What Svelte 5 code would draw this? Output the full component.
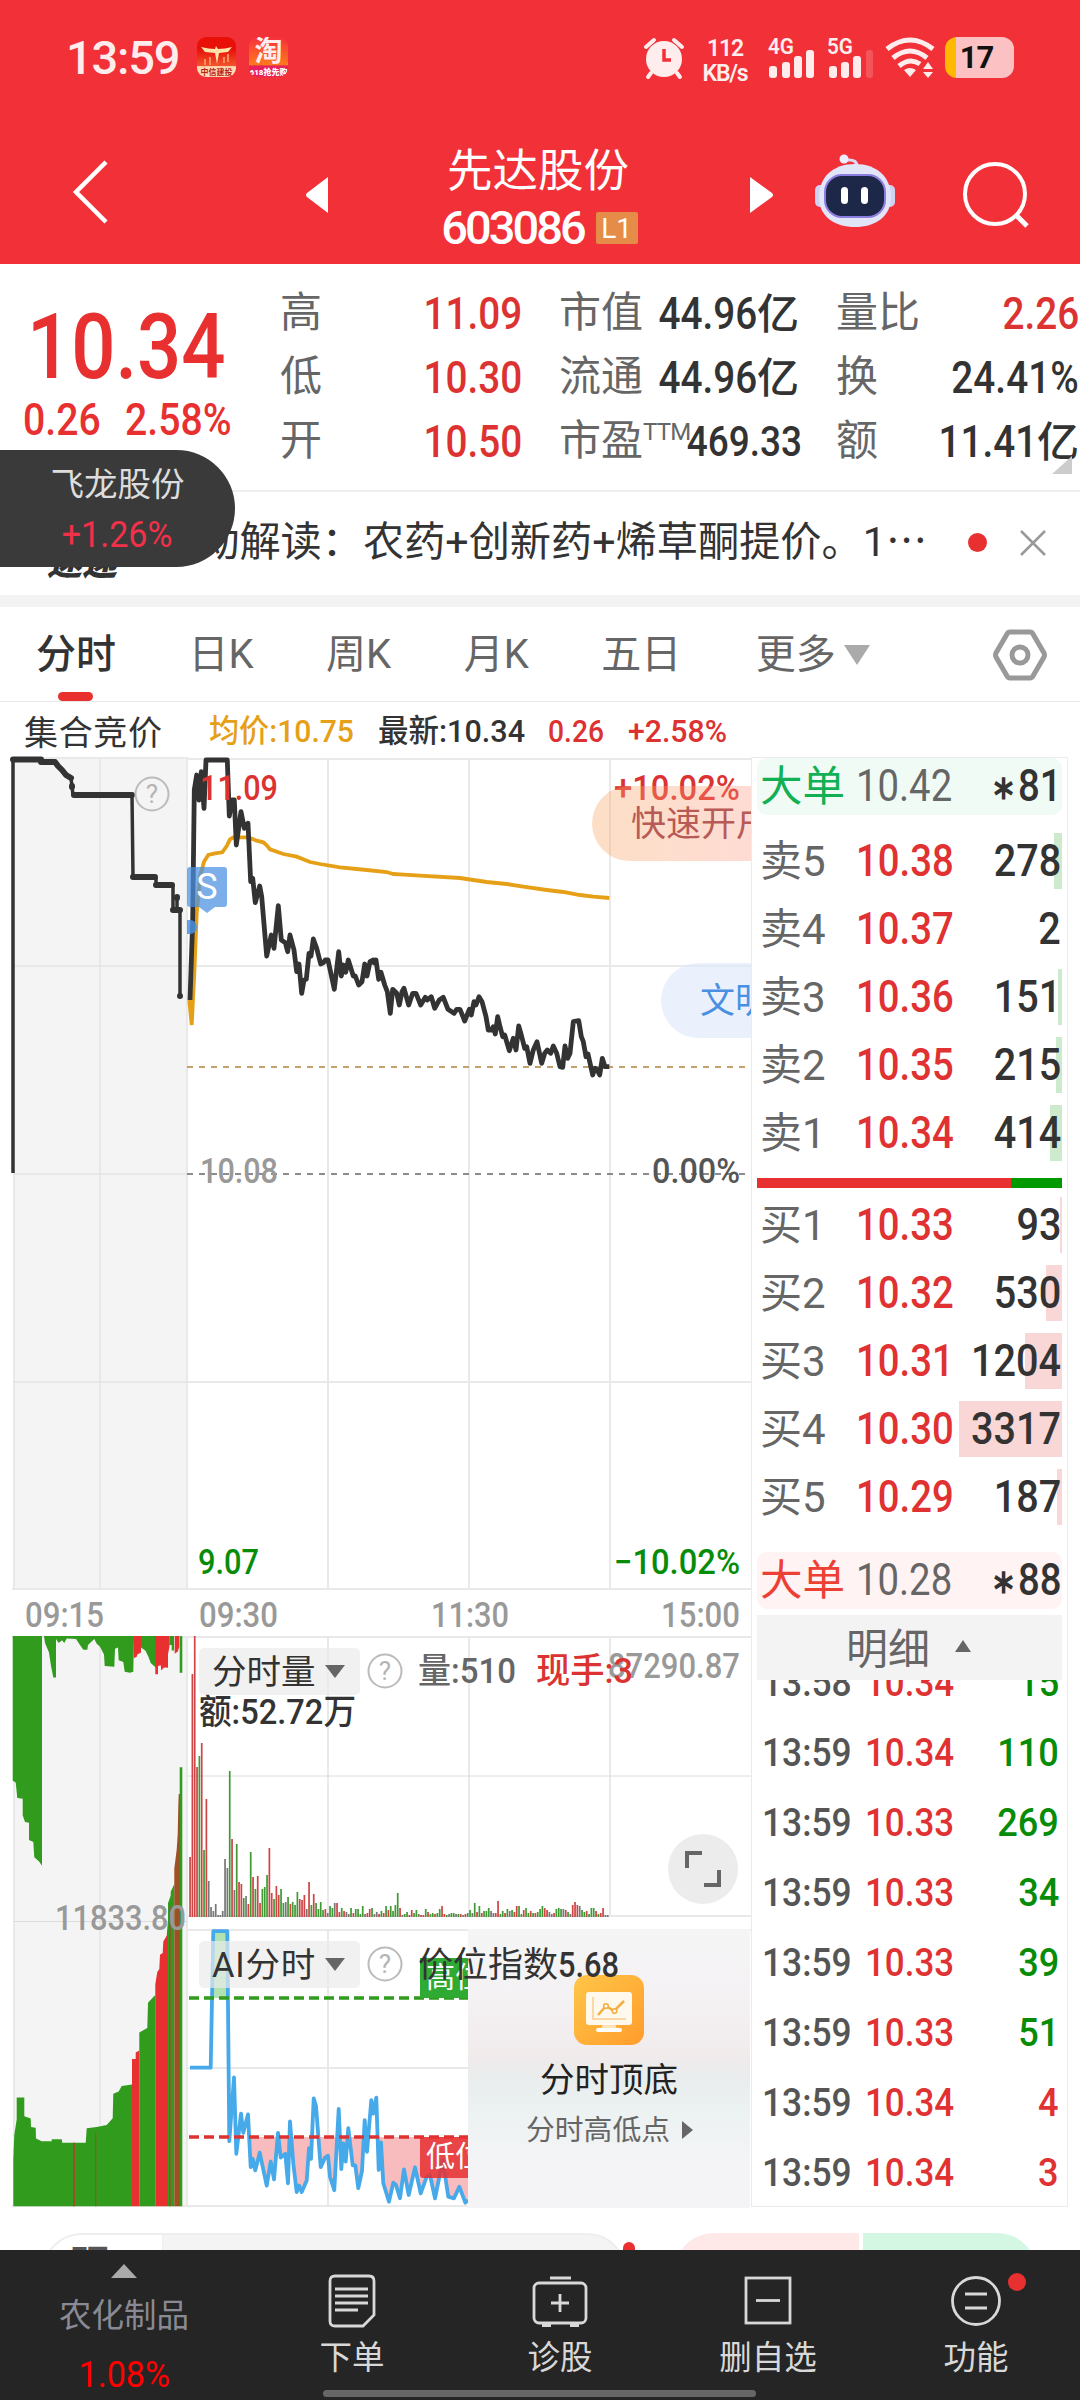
<script>
    const quotes = [
        { label: "高", value: "11.09", up: true },
        { label: "市值", value: "44.96", unit: "亿" },
        { label: "量比", value: "2.26", up: true },
        { label: "低", value: "10.30", up: true },
        { label: "流通", value: "44.96", unit: "亿" },
        { label: "换", value: "24.41%" },
        { label: "开", value: "10.50", up: true },
        { label: "市盈", sup: "TTM", value: "469.33" },
        { label: "额", value: "11.41", unit: "亿" },
    ];

    const tabs = ["分时", "日K", "周K", "月K", "五日"];

    // bar = width of the depth bar behind the volume
    const asks = [
        { label: "卖5", price: "10.38", qty: 278, bar: 8 },
        { label: "卖4", price: "10.37", qty: 2, bar: 0 },
        { label: "卖3", price: "10.36", qty: 151, bar: 4 },
        { label: "卖2", price: "10.35", qty: 215, bar: 6 },
        { label: "卖1", price: "10.34", qty: 414, bar: 12 },
    ];
    const bids = [
        { label: "买1", price: "10.33", qty: 93, bar: 2 },
        { label: "买2", price: "10.32", qty: 530, bar: 16 },
        { label: "买3", price: "10.31", qty: 1204, bar: 37 },
        { label: "买4", price: "10.30", qty: 3317, bar: 103 },
        { label: "买5", price: "10.29", qty: 187, bar: 5 },
    ];
    const trades = [
        { time: "13:58", price: "10.34", qty: 15, side: "sell" },
        { time: "13:59", price: "10.34", qty: 110, side: "sell" },
        { time: "13:59", price: "10.33", qty: 269, side: "sell" },
        { time: "13:59", price: "10.33", qty: 34, side: "sell" },
        { time: "13:59", price: "10.33", qty: 39, side: "sell" },
        { time: "13:59", price: "10.33", qty: 51, side: "sell" },
        { time: "13:59", price: "10.34", qty: 4, side: "buy" },
        { time: "13:59", price: "10.34", qty: 3, side: "buy" },
    ];

    // chart series are kept as flat x,y lists in third-of-a-pixel units
    function trace(flat, x0, y0, sy = 3) {
        const out = [];
        for (let i = 0; i < flat.length; i += 2) {
            out.push((x0 + flat[i] / 3).toFixed(1) + "," + (y0 + flat[i + 1] / sy).toFixed(1));
        }
        return out.join(" ");
    }

    const priceLine =
        trace([570,780,578,540,583,150,590,105,597,180,604,95,612,205,618,60,682,60,688,228,696,180,703,180,709,315,723,215,733,265,744,250,752,425,758,415,766,488,779,438,785,470,800,648,814,585,822,625,835,497,844,600,856,608,863,635,870,585,882,630,890,695,897,672,905,760,912,720,919,718,927,640,933,648,940,597,950,625,962,672,970,668,976,660,984,660,1003,748,1016,635,1024,708,1030,675,1037,697,1045,660,1060,708,1066,708,1076,735,1086,725,1094,672,1101,708,1110,665,1120,660,1122,668,1128,660,1136,718], 0, 740) +
        " " +
        trace([3,697,14,735,22,755,31,820,38,748,50,760,58,795,66,755,72,745,86,795,98,760,108,760,122,795,136,772,142,780,154,770,164,805,178,780,190,772,204,808,222,820,230,808,240,808,254,843,268,808,274,825,282,785,288,795,297,770,306,785,318,830,325,870,334,870,340,860,346,882,353,830,360,860,368,890,374,885,388,932,400,895,408,930,416,858,424,885,434,925,440,920,450,970,460,930,471,905,485,970,494,940,502,930,512,940,520,918,530,940,540,980,548,982,555,918,563,955,570,940,580,845,596,842,604,890,610,905,618,950,624,942,638,1005,645,985,652,990,659,1005,667,955,675,980,688,980], 380, 740);

    const avgLine =
        trace([568,780,575,855,583,700,590,520,600,410,612,365,625,345,645,340,667,337,680,318,690,298,700,292,745,292,770,302,790,307,800,316,810,328,850,342,890,350,930,366,960,372,1020,382,1100,390,1160,396,1180,402], 0, 740) +
        " " +
        trace([60,403,120,407,240,414,320,426,380,432,430,440,500,450,550,456,600,465,640,470,688,474], 380, 740);

    const aiLine =
        trace([570,1170,632,1170,640,813,682,813,688,1362,702,1195,709,1395,723,1290,730,1340,744,1292,752,1430,758,1408,766,1438,779,1392,800,1478,812,1415,822,1462,834,1340,842,1405,856,1395,864,1472,870,1310,880,1420,890,1495,897,1478,905,1495,920,1465,927,1380,933,1408,941,1250,948,1270,962,1430,975,1405,984,1400,990,1455,1003,1490,1016,1278,1024,1435,1030,1368,1037,1415,1045,1328,1058,1425,1066,1425,1075,1485,1086,1440,1094,1307,1101,1390,1114,1255,1120,1290,1129,1248,1136,1437,1143,1365], 0, 1620, 2.6133) +
        " " +
        trace([10,1450,27,1505,40,1448,48,1455,60,1495,72,1408,86,1485,105,1402,122,1480,140,1430,150,1425,165,1495,176,1440,188,1380,205,1490,222,1495,238,1460,256,1508,264,1500], 380, 1700);

    // auction volume, unmatched on top and matched below
    const auction = [
        { c: "g", d: [38,42,38,420,47,425,52,465,68,467,68,510,75,528,87,530,87,575,100,580,103,620,118,632,126,642,126,42] },
        { c: "g", d: [132,42,135,60,147,85,153,120,160,150,168,150,168,50,176,60,186,53,193,60,200,48,228,50,240,65,250,78,262,78,264,65,283,50,290,62,300,70,312,90,314,120,343,122,345,75,354,72,356,105,370,110,374,135,390,138,400,135,402,42] },
        { c: "r", d: [401,42,401,100,410,96,412,90,423,85,423,42] },
        { c: "g", d: [423,42,423,72,436,80,445,95,452,112,468,125,468,42] },
        { c: "r", d: [466,42,466,142,474,142,474,120,482,118,484,132,492,124,504,125,504,90,509,65,509,42] },
        { c: "g", d: [509,42,509,65,515,65,515,80,522,80,522,42] },
        { c: "r", d: [524,42,524,88,533,82,538,70,538,42] },
        { c: "g", d: [539,42,539,138,547,138,547,42] },
        { c: "g", d: [40,1532,40,1410,43,1345,50,1305,50,1248,73,1248,73,1297,92,1303,93,1325,107,1327,108,1355,125,1362,155,1362,155,1357,185,1357,187,1366,257,1366,260,1328,290,1325,320,1320,338,1302,340,1238,356,1232,365,1218,396,1214,396,1532] },
        { c: "r", d: [396,1532,396,1147,407,1147,407,1130,418,1125,418,1532] },
        { c: "g", d: [418,1532,418,1078,442,1066,444,1000,455,990,466,980,466,1532] },
        { c: "r", d: [466,1532,466,952,472,920,478,912,480,875,488,870,490,840,500,825,504,785,504,1532] },
        { c: "g", d: [504,1532,504,740,512,720,512,710,523,690,523,1532] },
        { c: "b", d: [523,1532,523,650,530,600,533,560,535,485,536,455,540,455,540,1532] },
        { c: "g", d: [539,1532,539,385,547,385,547,1532] },
        { c: "b", d: [219,1532,219,1366,225,1366,225,1532] },
        { c: "b", d: [285,1532,285,1340,289,1340,289,1532] },
        { c: "b", d: [508,1532,508,760,512,745,512,1532] },
    ];
    const auctionColors = { g: "#319b1d", r: "#e83030", b: "#9c5024" };

    // minute volume: height + side (r/g/k)
    const volume = "60r 243r 281r 150r 161g 174r 67g 118r 36k 10k 6k 13k 2k 2k 6k 58k 49k 146g 78r 27k 73g 35r 33r 19g 21k 13r 65g 40r 28g 41r 14r 28g 30g 42g 69r 24r 18g 31r 22r 28g 14g 15k 20g 13r 15g 12g 25g 18r 17r 22r 8k 35r 12g 23r 14g 8g 15g 7g 8r 4k 11g 9g 14k 14r 5r 9g 6r 5k 3k 9g 4r 8g 8g 3g 11g 3k 4r 8r 9g 3k 5k 3r 6g 4r 11g 7r 11g 6g 12g 24g 9r 2k 3g 5g 2r 7r 4g 7g 3k 2r 2r 8g 5r 3g 4g 3r 4g 8g 11r 3r 2g 3k 4g 4g 3k 3g 3r 2k 3r 4g 7g 4k 14g 5r 11g 4r 6g 6g 9g 6k 4k 4r 16r 3g 6g 4r 8g 6k 7g 5r 11r 11g 3g 7r 9g 4g 6r 4g 4r 5g 8g 11g 9r 7r 5k 3k 4r 8g 9g 8g 8k 7r 5g 3k 12r 15r 12r 11k 7g 5g 6r 3g 9g 9g 6r 3g 4r 9r 2k 2k"
        .split(" ")
        .map((v) => ({ h: parseInt(v), c: v.at(-1) }));
    const volumeColors = { r: "#cf4444", g: "#3f9a33", k: "#777" };
    const step = 420 / volume.length;
</script>

{#snippet help(cx, cy)}
    <circle {cx} {cy} r="16.5" fill="none" stroke="#bbb" stroke-width="2" />
    <text x={cx} y={cy + 9} text-anchor="middle" fill="#b4b4b4" font-size="26">?</text>
{/snippet}

{#snippet level(row, side)}
    <div class="level">
        <i class="depth {side}" style="width: {row.bar}px"></i>
        <span class="lv-label">{row.label}</span>
        <span class="num lv-price">{row.price}</span>
        <span class="num right lv-qty">{row.qty}</span>
    </div>
{/snippet}

<div class="app">
    <header>
        <div class="status">
            <span class="clock">13:59</span>
            <div class="badge-app citic">
                <svg width="39" height="40" viewBox="0 0 39 40">
                    <path d="M4 10Q12 12 18 12L19 9L21 12Q28 12 35 10L31 15L22 16L20 27L18 16L8 15Z" fill="#ffe3a8" />
                    <path d="M8 22v6M13 20v8M27 20v6M31 17v8" stroke="#ff8c5a" stroke-width="2" />
                </svg>
                <b>中信建投</b>
            </div>
            <div class="badge-app tao"><span>淘</span><b>618抢先购</b></div>
            <div class="status-right">
                <svg class="alarm" width="42" height="42" viewBox="0 0 42 42">
                    <circle cx="21" cy="22" r="18" fill="#ffeded" />
                    <path d="M3 10L11 3M39 10L31 3M8 36l-3 4M34 36l3 4" stroke="#ffeded" stroke-width="4" stroke-linecap="round" />
                    <path d="M21 12V23H28" fill="none" stroke="#f23037" stroke-width="3.5" />
                </svg>
                <div class="speed"><span>112</span><span>KB/s</span></div>
                <svg width="46" height="42" viewBox="0 0 46 42" fill="#ffeded">
                    <text x="0" y="17" font-size="22" font-weight="600" textLength="26" lengthAdjust="spacingAndGlyphs">4G</text>
                    <rect x="1" y="29" width="8" height="12" rx="3" /><rect x="14" y="25" width="8" height="16" rx="3" />
                    <rect x="26" y="19" width="8" height="22" rx="3" /><rect x="38" y="13" width="8" height="28" rx="3" />
                </svg>
                <svg class="sim2" width="46" height="42" viewBox="0 0 46 42" fill="#ffeded">
                    <text x="0" y="17" font-size="22" font-weight="600" textLength="26" lengthAdjust="spacingAndGlyphs">5G</text>
                    <rect x="2" y="29" width="8" height="12" rx="3" /><rect x="14" y="25" width="8" height="16" rx="3" />
                    <rect x="26" y="19" width="8" height="22" rx="3" /><rect x="39" y="13" width="7" height="28" rx="3" opacity=".2" />
                </svg>
                <svg class="wifi" width="50" height="42" viewBox="0 0 50 42" fill="none" stroke="#ffeded" stroke-width="5">
                    <path d="M2 12Q25 -6 48 12M8 21Q25 7 42 21M14 29Q25 20 35 27" />
                    <path d="M19 33Q25 29 31 33L25 40Z M38 32L43 25L48 32Z M38 35L43 41L48 35Z" fill="#ffeded" stroke="none" />
                </svg>
                <div class="battery">17</div>
            </div>
        </div>
        <div class="nav">
            <svg class="back" width="36" height="66" viewBox="0 0 36 66"><path d="M33 3L3 33L33 63" fill="none" stroke="#fff" stroke-width="4.5" /></svg>
            <svg class="prev" width="22" height="36" viewBox="0 0 22 36"><path d="M22 0V36L1 20Q-1 18 1 16Z" fill="#fff" /></svg>
            <div class="title">
                <h1>先达股份</h1>
                <div class="code"><span>603086</span><em>L1</em></div>
            </div>
            <svg class="next" width="23" height="36" viewBox="0 0 23 36"><path d="M0 0V36L22 20Q24 18 22 16Z" fill="#fff" /></svg>
            <svg class="robot" width="80" height="76" viewBox="0 0 80 76">
                <path d="M42 15Q43 6 32 7" fill="none" stroke="#d9dcf5" stroke-width="3" />
                <circle cx="29" cy="6" r="4.5" fill="#eef" />
                <rect x="0" y="32" width="12" height="22" rx="5" fill="#cfd3f2" /><rect x="68" y="32" width="12" height="22" rx="5" fill="#cfd3f2" />
                <path d="M40 11C62 11 76 24 76 44C76 64 60 74 40 74S4 64 4 44C4 24 18 11 40 11Z" fill="#e2e4f8" />
                <rect x="10" y="22" width="60" height="42" rx="17" fill="#1d2747" stroke="#8b7ee0" stroke-width="2" />
                <rect x="26" y="34" width="7" height="17" rx="3.5" fill="#fff" /><rect x="46" y="34" width="7" height="17" rx="3.5" fill="#fff" />
            </svg>
            <svg class="search" width="68" height="68" viewBox="0 0 68 68" fill="none" stroke="#fff" stroke-width="4"><circle cx="33" cy="33" r="30" /><path d="M54 54L65 65" stroke-width="5" /></svg>
        </div>
    </header>

    <section class="quote">
        <div class="last">
            <div class="num big">10.34</div>
            <div class="change"><span class="num">0.26</span><span class="num">2.58%</span></div>
        </div>
        <div class="grid">
            {#each quotes as q}
                <div class="cell">
                    <span class="q-label">{q.label}{#if q.sup}<sup>{q.sup}</sup>{/if}</span>
                    <span class="q-value" class:up={q.up} class:small={q.sup}>
                        <span class="num right">{q.value}</span>{#if q.unit}<b>{q.unit}</b>{/if}
                    </span>
                </div>
            {/each}
        </div>
        <i class="corner"></i>
    </section>

    <section class="news">
        <span class="tag">速递</span>
        <p>异动解读：农药+创新药+烯草酮提价。1⋯</p>
        <i class="dot"></i>
        <svg width="26" height="26" viewBox="0 0 26 26"><path d="M1 1L25 25M25 1L1 25" stroke="#999" stroke-width="2.5" /></svg>
    </section>

    <div class="float-pill"><span>飞龙股份</span><span class="num pct">+1.26%</span></div>

    <nav class="tabs">
        {#each tabs as tab, i}
            <span class="tab" class:active={i === 0}>{tab}</span>
        {/each}
        <span class="tab more">更多<i></i></span>
        <svg width="54" height="52" viewBox="0 0 54 52" fill="none" stroke="#999" stroke-width="5">
            <path d="M17 3H37Q39 3 40 5L51 24Q52 26 51 28L40 47Q39 49 37 49H17Q15 49 14 47L3 28Q2 26 3 24L14 5Q15 3 17 3Z" /><circle cx="27" cy="26" r="8" />
        </svg>
    </nav>

    <div class="body">
        <div class="charts">
            <svg width="752" height="1506" viewBox="0 702 752 1506">
                <defs>
                    <clipPath id="below"><rect x="188" y="2137" width="280" height="71" /></clipPath>
                    <clipPath id="left"><rect x="188" y="1925" width="280" height="283" /></clipPath>
                </defs>
                <g font-size="34" fill="#333">
                    <text x="24" y="745" textLength="138">集合竞价</text>
                    <text class="d" x="209" y="742" fill="#e6a017" font-size="32" textLength="145" lengthAdjust="spacingAndGlyphs">均价:10.75</text>
                    <text class="d" x="378" y="742" font-size="32" textLength="147" lengthAdjust="spacingAndGlyphs">最新:10.34</text>
                    <text class="d" x="548" y="742" fill="#dc3232" font-size="32" textLength="56" lengthAdjust="spacingAndGlyphs">0.26</text>
                    <text class="d" x="628" y="742" fill="#dc3232" font-size="32" textLength="99" lengthAdjust="spacingAndGlyphs">+2.58%</text>
                </g>

                <rect x="13" y="757" width="174" height="832" fill="#f4f4f4" />
                <rect x="13" y="1636" width="174" height="570" fill="#f4f4f4" />
                <g stroke="#e9e9e9" stroke-width="2">
                    <path d="M12 758H187M14 757V1589M100 757V1589M100 1636V2206M14 1636V2206M187 757V1589M187 1636V2206" />
                    <path d="M188 759H752M188 966H752M188 1382H752M12 1589H752M12 1637H752M188 1916H752M188 1930H752M188 2068H468M12 2206H468" />
                    <path d="M328 759V1589M469 759V1589M610 759V1589M328 1637V1916M469 1637V1916M610 1637V1916M328 1930V2206" />
                    <path d="M14 966H187M14 1174H187M14 1382H187M14 1921.5H187M188 1776H752" stroke="#dcdcdc" stroke-width="1" />
                </g>
                <path d="M187 1067H746" stroke="#c3a16f" stroke-width="2" stroke-dasharray="6 6" />
                <path d="M187 1174H746" stroke="#8c8c8c" stroke-width="2" stroke-dasharray="6 6" />

                <g fill="none" stroke="#333" stroke-linecap="round" stroke-linejoin="round">
                    <path d="M13 1173V759M71 778L73 795M132 795L133 877M156 877V885M173 885V910M177 897V910M180 910V996" stroke-width="3.5" stroke-linecap="butt" />
                    <path d="M13 759.5H41M41 762H55L58 766L62 770L66 775L71 778M72 786V787M74 795H132M133 877H155M156 885H172M173 910H180M177 897V898M180 996V996.1" stroke-width="6" />
                </g>
                {@render help(152, 794)}

                <polyline points={avgLine} fill="none" stroke="#e6a017" stroke-width="3.8" />
                <polyline points={priceLine} fill="none" stroke="#333" stroke-width="4.8" stroke-linejoin="round" />

                <path d="M190 867H224Q227 867 227 870V904Q227 907 224 907H215L207 913L199 907H190Q187 907 187 904V870Q187 867 190 867Z" fill="#4a90e2" fill-opacity=".72" />
                <path d="M187 920H190A7 7 0 0 1 190 934H187Z" fill="#4a90e2" opacity=".85" />
                <text x="207" y="899" font-size="36" fill="#fff" text-anchor="middle">S</text>

                <g class="d" font-size="35">
                    <g fill="#dc3232"><text x="200" y="800" textLength="78" lengthAdjust="spacingAndGlyphs">11.09</text><text x="614" y="800" textLength="126" lengthAdjust="spacingAndGlyphs">+10.02%</text></g>
                    <text x="200" y="1183" fill="#999" textLength="78" lengthAdjust="spacingAndGlyphs">10.08</text>
                    <text x="652" y="1183" fill="#555" textLength="88" lengthAdjust="spacingAndGlyphs">0.00%</text>
                    <g fill="#078c07"><text x="198" y="1574" textLength="61" lengthAdjust="spacingAndGlyphs">9.07</text><text x="614" y="1574" textLength="126" lengthAdjust="spacingAndGlyphs">−10.02%</text></g>
                    <g fill="#999">
                        <text x="25" y="1627" textLength="79" lengthAdjust="spacingAndGlyphs">09:15</text>
                        <text x="199" y="1627" textLength="79" lengthAdjust="spacingAndGlyphs">09:30</text>
                        <text x="431" y="1627" textLength="78" lengthAdjust="spacingAndGlyphs">11:30</text>
                        <text x="661" y="1627" textLength="79" lengthAdjust="spacingAndGlyphs">15:00</text>
                    </g>
                </g>

                {#each auction as a}
                    <polygon points={trace(a.d, 0, 1620, 2.6133)} fill={auctionColors[a.c]} />
                {/each}
                <text class="d" x="55" y="1930" font-size="35" fill="#999" textLength="131" lengthAdjust="spacingAndGlyphs">11833.80</text>

                {#each volume as v, i}
                    <rect x={189.2 + i * step} y={1917 - v.h} width="1.7" height={v.h} fill={volumeColors[v.c]} />
                {/each}

                <rect x="213" y="1931" width="15" height="67" fill="#b0e3b0" />
                <polygon points="190,2137 {aiLine} 468,2137" fill="#f8bcbf" clip-path="url(#below)" />
                <g clip-path="url(#left)">
                    <polyline points={aiLine} fill="none" stroke="#45a9ea" stroke-width="3.8" stroke-linejoin="round" />
                    <path d="M189 1998H468" stroke="#319b1d" stroke-width="3.5" stroke-dasharray="10 5" />
                    <path d="M189 2137H468" stroke="#dc3232" stroke-width="3.5" stroke-dasharray="10 5" />
                    <rect x="420" y="1958" width="60" height="40" fill="#2faa33" />
                    <rect x="420" y="2137" width="60" height="41" rx="3" fill="#e83030" fill-opacity=".85" />
                    <text x="426" y="1988" font-size="29" fill="#fff">高位</text>
                    <text x="426" y="2167" font-size="29" fill="#fff">低位</text>
                </g>
                {@render help(385, 1671)}
                {@render help(385, 1964)}
                <text class="d" x="418" y="1683" font-size="35" fill="#666" textLength="98" lengthAdjust="spacingAndGlyphs">量:510</text>
                <text class="d" x="608" y="1678" font-size="35" fill="#999" textLength="132" lengthAdjust="spacingAndGlyphs">87290.87</text>
                <text class="d" x="536" y="1683" font-size="35" fill="#dc3232" textLength="97" lengthAdjust="spacingAndGlyphs">现手:3</text>
                <text class="d" x="199" y="1724" font-size="35" fill="#333" textLength="157" lengthAdjust="spacingAndGlyphs">额:52.72万</text>
            </svg>

            <div class="chip vol">分时量<i></i></div>
            <div class="chip ai"><span>AI分时</span><i></i></div>

            <div class="promo open">快速开户</div>
            <div class="promo civil">文明</div>

            <div class="expand">
                <svg width="36" height="36" viewBox="0 0 36 36" fill="none" stroke="#666" stroke-width="4"><path d="M2 17V2H17M34 19V34H19" /></svg>
            </div>

            <div class="card">
                <svg width="70" height="70" viewBox="0 0 70 70">
                    <defs><linearGradient id="sun" x1="0" y1="0" x2="1" y2="1"><stop offset="0" stop-color="#ffc648" /><stop offset="1" stop-color="#ff9c2c" /></linearGradient></defs>
                    <rect width="70" height="70" rx="13" fill="url(#sun)" />
                    <path d="M29 49H41L43 54H27Z" fill="#ffe3b8" />
                    <rect x="12" y="17" width="46" height="33" rx="3" fill="#fff8ec" /><rect x="22" y="53" width="26" height="4" rx="2" fill="#fff" />
                    <path d="M19 22V44H52" fill="none" stroke="#fbd9a5" stroke-width="2" />
                    <path d="M24 40L32 31L40 36L50 26" fill="none" stroke="#f5ae3f" stroke-width="2.5" />
                    <circle cx="32" cy="31" r="2.3" fill="#fff" stroke="#f5ae3f" stroke-width="1.6" /><circle cx="40.5" cy="36" r="2.3" fill="#fff" stroke="#f5ae3f" stroke-width="1.6" />
                </svg>
                <strong>分时顶底</strong>
                <span>分时高低点<i></i></span>
            </div>
            <div class="index">价位指数<span class="num">5.68</span></div>
        </div>

        <aside class="book">
            <div class="block-order sell"><span>大单</span><span class="num p">10.42</span><span class="num right q"><small>∗</small>81</span></div>
            <div class="levels">
                {#each asks as row}{@render level(row, "ask")}{/each}
            </div>
            <div class="ratio"><i></i></div>
            <div class="levels bids">
                {#each bids as row}{@render level(row, "bid")}{/each}
            </div>
            <div class="block-order buy"><span>大单</span><span class="num p">10.28</span><span class="num right q"><small>∗</small>88</span></div>
            <div class="detail"><span>明细</span><i></i></div>
            <div class="trades">
                {#each trades as t}
                    <div class="trade">
                        <span class="num t-time">{t.time}</span>
                        <span class="num t-price">{t.price}</span>
                        <span class="num right t-qty {t.side}">{t.qty}</span>
                    </div>
                {/each}
            </div>
        </aside>
    </div>

    <div class="peek">
        <div class="peek-input"><span>研</span></div>
        <i class="peek-dot"></i>
        <div class="peek-vote"><i></i><i></i></div>
    </div>

    <footer>
        <div class="sector"><i></i><span>农化制品</span><b>1.08%</b></div>
        <div class="item">
            <svg width="50" height="54" viewBox="0 0 50 54"><path d="M8 2H42Q47 2 47 7V41L36 52H8Q3 52 3 47V7Q3 2 8 2ZM8 15H41M8 22H41M8 29H41M8 36H31" /></svg>
            下单
        </div>
        <div class="item">
            <svg width="56" height="54" viewBox="0 0 56 54"><rect x="2" y="9" width="52" height="40" rx="5" /><path d="M18 4H39M28 20V38M19 29H37" /><path d="M10 51H19M38 51H47" stroke-width="4" /></svg>
            诊股
        </div>
        <div class="item">
            <svg width="50" height="54" viewBox="0 0 50 54"><rect x="3" y="4" width="44" height="45" /><path d="M13 26.5H37" /></svg>
            删自选
        </div>
        <div class="item">
            <svg width="50" height="54" viewBox="0 0 50 54"><circle cx="25" cy="27" r="23.5" /><path d="M14 20H36M14 34H36" /></svg>
            功能
            <i class="red-dot"></i>
        </div>
        <div class="home"></div>
    </footer>
</div>

<style>
    :global(body) {
        background: #fff;
    }
    .app {
        position: relative;
        width: 1080px;
        height: 2400px;
        overflow: hidden;
        background: #fff;
        color: #333;
        font-family: Roboto, "Noto Sans CJK SC", sans-serif;
        line-height: 1;
        display: flex;
        flex-direction: column;
        white-space: nowrap;
    }
    .app * {
        box-sizing: border-box;
        flex-shrink: 0;
    }
    svg {
        display: block;
        overflow: visible;
    }
    i,
    em {
        font-style: normal;
    }
    .num {
        display: inline-block;
        font-weight: 500;
        transform: scaleX(0.88);
        transform-origin: left center;
    }
    .num.right {
        transform-origin: right center;
    }
    .d {
        font-weight: 500;
    }

    /* header */
    header {
        height: 264px;
        background: #f23037;
        color: #fff;
    }
    .status {
        display: flex;
        align-items: flex-start;
        height: 125px;
        padding: 37px 66px 0 66px;
        color: #ffeded;
    }
    .clock {
        width: 131px;
        font-size: 47px;
        font-weight: 500;
        line-height: 42px;
        letter-spacing: -1.2px;
    }
    .badge-app {
        position: relative;
        width: 39px;
        height: 40px;
        margin-right: 13px;
        border-radius: 9px;
        overflow: hidden;
        text-align: center;
    }
    .badge-app b {
        position: absolute;
        left: 0;
        bottom: 0;
        width: 78px;
        font-size: 16px;
        line-height: 20px;
        transform: scale(0.5);
        transform-origin: left bottom;
    }
    .citic {
        background: linear-gradient(#e81008 30%, #f0542c 72%, #ffd9b0 74%);
    }
    .citic b {
        color: #b8241a;
    }
    .tao {
        background: linear-gradient(#f5303c, #ff7a1c 70%, #e8205c 72%);
        font-size: 28px;
        font-weight: 700;
        line-height: 30px;
    }
    .tao b {
        color: #fff;
    }
    .status-right {
        display: flex;
        margin-left: auto;
    }
    .speed {
        display: flex;
        flex-direction: column;
        gap: 2px;
        width: 46px;
        margin: 0 20px 0 17px;
        font-size: 23px;
        font-weight: 600;
        text-align: center;
        letter-spacing: -1.2px;
    }
    .sim2 {
        margin-left: 13px;
    }
    .wifi {
        margin: 0 10px 0 12px;
    }
    .battery {
        width: 69px;
        height: 41px;
        border-radius: 12px;
        background: linear-gradient(90deg, #ffb900 11px, #fbc1c3 11px);
        color: #111;
        font-size: 31px;
        font-weight: 700;
        line-height: 42px;
        letter-spacing: -1px;
        text-align: center;
        padding-right: 6px;
    }
    .nav {
        display: flex;
        align-items: center;
        height: 139px;
        padding-left: 73px;
    }
    .back {
        margin: 0 197px 6px 0;
    }
    .title {
        width: 422px;
        text-align: center;
        padding: 2px 2px 0 0;
    }
    h1 {
        margin: 0 0 12px;
        font-size: 45.5px;
        font-weight: 400;
        line-height: 52px;
    }
    .code {
        display: flex;
        justify-content: center;
        align-items: center;
        gap: 12px;
        font-size: 47px;
        font-weight: 500;
        letter-spacing: -3px;
        line-height: 36px;
        padding-left: 3px;
    }
    .code em {
        width: 42px;
        height: 32px;
        background: #e58c48;
        border-radius: 2px;
        font-size: 28px;
        font-weight: 400;
        line-height: 34px;
        letter-spacing: 0;
    }
    .robot {
        margin: 0 67px 8px 42px;
    }

    /* quote */
    .quote {
        position: relative;
        display: flex;
        height: 226px;
    }
    .last {
        width: 280px;
        padding: 38px 0 0 27px;
        color: #e83030;
    }
    .big {
        font-size: 91px;
        transform: scaleX(0.855);
    }
    .change {
        display: flex;
        gap: 15px;
        margin: 5px 0 0 -4px;
        font-size: 44px;
    }
    .change .num {
        transform: scaleX(0.89);
    }
    .grid {
        display: grid;
        grid-template-columns: 242px 240px 243px;
        column-gap: 37px;
        align-content: start;
        padding-top: 17px;
    }
    .cell {
        display: flex;
        justify-content: space-between;
        align-items: center;
        height: 64px;
        font-size: 42px;
    }
    .q-label {
        color: #666;
    }
    .q-label sup {
        font-size: 24px;
        vertical-align: 15px;
        line-height: 0;
        letter-spacing: -0.8px;
    }
    .q-value {
        color: #333;
        font-size: 44px;
        padding-top: 2px;
    }
    .q-value.small {
        font-size: 42px;
        width: 112px;
        display: flex;
        justify-content: flex-end;
    }
    .q-value b {
        font-size: 42px;
        font-weight: 500;
    }
    .q-value.up {
        color: #dc3232;
    }
    .corner {
        position: absolute;
        right: 8px;
        bottom: 16px;
        border-left: 20px solid transparent;
        border-bottom: 18px solid #ccc;
    }

    /* news */
    .news {
        display: flex;
        align-items: center;
        height: 105px;
        padding: 0 34px 2px 47px;
        margin-bottom: 12px;
        box-shadow: 0 12px 0 #f3f3f3;
        border-top: 2px solid #eee;
    }
    .tag {
        width: 110px;
        font-size: 35px;
        font-weight: 900;
        font-style: italic;
        padding-top: 42px;
    }
    .news p {
        width: 811px;
        margin: 0;
        font-size: 41.2px;
    }
    .news .dot {
        width: 19px;
        height: 19px;
        margin-right: 33px;
        border-radius: 50%;
        background: #e83030;
    }
    .float-pill {
        position: absolute;
        left: 0;
        top: 450px;
        width: 235px;
        height: 117px;
        border-radius: 0 59px 59px 0;
        background: #3a3a3a;
        color: #ddd;
        font-size: 33.5px;
        display: flex;
        flex-direction: column;
        align-items: center;
        gap: 14px;
        padding-top: 18px;
    }
    .float-pill .pct {
        color: #f2304a;
        transform-origin: center;
        transform: scaleX(0.92);
        font-size: 37px;
        font-weight: 400;
    }

    /* tabs */
    .tabs {
        display: flex;
        align-items: center;
        height: 95px;
        padding: 2px 33px 0 36px;
        border-bottom: 1px solid #e8e8e8;
        font-size: 40px;
        color: #666;
    }
    .tab {
        position: relative;
        margin-right: 72.5px;
    }
    .tab.active {
        color: #333;
        font-weight: 500;
    }
    .tab.active::after {
        content: "";
        position: absolute;
        left: 22px;
        bottom: -26px;
        width: 35px;
        height: 9px;
        border-radius: 5px;
        background: #e8302f;
    }
    .tab.more {
        display: flex;
        align-items: center;
        gap: 8px;
        margin: 0 auto 0 2px;
    }
    .tab.more i {
        border: 13px solid transparent;
        border-top: 20px solid #aaa;
        border-bottom: 0;
    }

    /* charts */
    .body {
        display: flex;
        height: 1506px;
    }
    .charts {
        position: relative;
        width: 751px;
        overflow: hidden;
    }
    .chip {
        position: absolute;
        left: 199px;
        width: 161px;
        height: 47px;
        border-radius: 5px;
        background: rgba(235, 235, 235, 0.7);
        font-size: 34.5px;
        display: flex;
        align-items: center;
        justify-content: space-between;
        padding: 2px 15px 0 13px;
    }
    .chip i {
        border: 10px solid transparent;
        border-top: 13px solid #666;
        border-bottom: 0;
        margin-bottom: 2px;
    }
    .vol {
        top: 946px;
    }
    .ai {
        top: 1239px;
    }
    .ai span {
        letter-spacing: 0.8px;
    }
    .promo {
        position: absolute;
        right: 0;
        height: 75px;
        border-radius: 38px 0 0 38px;
        font-size: 35px;
        line-height: 77px;
        padding-left: 39px;
        overflow: hidden;
    }
    .open {
        top: 84px;
        width: 159px;
        background: linear-gradient(90deg, rgba(248, 170, 105, 0.38), rgba(252, 145, 120, 0.32));
        color: #b85a55;
    }
    .civil {
        top: 261px;
        width: 90px;
        background: rgba(222, 233, 251, 0.65);
        color: #4a90e2;
    }
    .expand {
        position: absolute;
        left: 668px;
        top: 1132px;
        width: 70px;
        height: 70px;
        border-radius: 50%;
        background: #ececec;
        display: grid;
        place-items: center;
    }
    .card {
        position: absolute;
        left: 468px;
        top: 1227px;
        width: 282px;
        height: 279px;
        background: linear-gradient(#f5f5f6 0%, #f4f1f3 28%, #f0eaeb 46%, #e9eded 54%, #edf2f3 68%, #f4f4f6 84%);
        display: flex;
        flex-direction: column;
        align-items: center;
        padding-top: 46px;
    }
    .card strong {
        margin-top: 18px;
        font-size: 34.5px;
        font-weight: 400;
        color: #222;
    }
    .card span {
        display: flex;
        align-items: center;
        gap: 12px;
        margin-top: 18px;
        padding-left: 1px;
        font-size: 28.8px;
        color: #666;
    }
    .card i {
        border: 9px solid transparent;
        border-left: 11px solid #666;
        border-right: 0;
    }
    .index {
        position: absolute;
        left: 418px;
        top: 1246px;
        font-size: 35px;
    }

    /* order book */
    .book {
        position: relative;
        width: 317px;
        height: 1450px;
        margin-top: 55px;
        border: 1px solid #ebebeb;
        padding: 0 5px;
        overflow: hidden;
    }
    .block-order {
        display: flex;
        align-items: center;
        height: 57px;
        border-radius: 10px;
        padding: 1px 1px 0 3px;
        font-size: 43.5px;
        background: #f1fbf6;
    }
    .block-order span:first-child {
        width: 96px;
        font-size: 42.5px;
        color: #12b055;
    }
    .block-order .p {
        color: #666;
        font-weight: 400;
        margin-right: -16px;
    }
    .block-order .q {
        margin-left: auto;
    }
    .block-order small {
        font-size: 34px;
        font-weight: 700;
        vertical-align: 2px;
        margin-right: 3px;
        line-height: 0;
    }
    .block-order.buy {
        margin-top: 21px;
        background: #fff3f3;
    }
    .block-order.buy span:first-child {
        color: #ec4034;
    }
    .levels {
        margin-top: 12px;
    }
    .levels.bids {
        margin-top: 3px;
    }
    .level {
        position: relative;
        display: flex;
        align-items: center;
        height: 68px;
        padding: 2px 1px 0 3px;
        font-size: 43.5px;
    }
    .depth {
        position: absolute;
        right: 0;
        top: 6px;
        height: 56px;
        background: #cdeacd;
    }
    .depth.bid {
        background: #fad7d7;
    }
    .lv-label {
        position: relative;
        width: 96px;
        font-size: 42px;
        color: #666;
    }
    .lv-price {
        color: #e03232;
        margin-right: -16px;
    }
    .lv-qty {
        margin-left: auto;
        transform: scaleX(0.91);
    }
    .ratio {
        height: 10px;
        margin-top: 11px;
        background: #009a00;
    }
    .ratio i {
        display: block;
        width: 254px;
        height: 10px;
        background: #e83030;
    }
    .detail {
        position: relative;
        display: flex;
        align-items: center;
        justify-content: center;
        gap: 25px;
        height: 65px;
        margin-top: 6px;
        background: #f3f3f3;
        color: #666;
        font-size: 42px;
        z-index: 1;
        padding-right: 2px;
    }
    .detail span {
        padding-top: 4px;
    }
    .detail i {
        border: 8px solid transparent;
        border-bottom: 12px solid #666;
        border-top: 0;
        margin-bottom: 4px;
    }
    .trades {
        margin-top: -33px;
    }
    .trade {
        display: flex;
        align-items: center;
        height: 70px;
        padding: 1px 3px 0 5px;
        font-size: 38px;
    }
    .t-time {
        width: 103px;
        color: #555;
        transform: scaleX(0.93);
    }
    .t-price {
        color: #e03232;
        transform: scaleX(0.92);
    }
    .t-qty {
        margin-left: auto;
        transform: scaleX(0.95);
    }
    .t-qty.sell {
        color: #078c07;
    }
    .t-qty.buy {
        color: #e03232;
    }

    /* peek row */
    .peek {
        display: flex;
        height: 42px;
        padding: 25px 0 0 42px;
        overflow: hidden;
    }
    .peek-input {
        width: 585px;
        height: 80px;
        border-radius: 40px;
        border: 2px solid #eee;
        background: linear-gradient(90deg, #fff 118px, #eee 118px, #f4f4f4 120px);
        padding: 10px 0 0 27px;
        font-size: 38px;
        font-weight: 700;
        color: #555;
    }
    .peek-dot {
        width: 12px;
        height: 16px;
        border-radius: 6px;
        margin: 9px 39px 0 -4px;
        background: #e83030;
    }
    .peek-vote {
        display: flex;
        gap: 4px;
        width: 363px;
        height: 80px;
        border-radius: 40px;
        overflow: hidden;
    }
    .peek-vote i {
        flex: 1;
        background: #ffe8e8;
    }
    .peek-vote i + i {
        flex: 0 0 174px;
        background: #d3f7e2;
    }

    /* footer */
    footer {
        position: relative;
        display: flex;
        height: 150px;
        background: #252525;
        color: #d8d8d8;
    }
    .sector {
        width: 248px;
        display: flex;
        flex-direction: column;
        align-items: center;
        padding-top: 14px;
    }
    .sector i {
        border: 13px solid transparent;
        border-bottom: 14px solid #aaa;
        border-top: 0;
    }
    .sector span {
        margin-top: 22px;
        font-size: 32.5px;
        color: #8a8a94;
    }
    .sector b {
        margin-top: 24px;
        font-size: 36px;
        font-weight: 400;
        color: #f00;
        transform: scaleX(0.95);
    }
    .item {
        position: relative;
        width: 208px;
        display: flex;
        flex-direction: column;
        align-items: center;
        gap: 14px;
        padding-top: 24px;
        font-size: 32.5px;
    }
    .item svg {
        fill: none;
        stroke: #d8d8d8;
        stroke-width: 2.8;
    }
    .red-dot {
        position: absolute;
        left: 136px;
        top: 23px;
        width: 18px;
        height: 18px;
        border-radius: 50%;
        background: #e83030;
    }
    .home {
        position: absolute;
        left: 323px;
        bottom: 3px;
        width: 433px;
        height: 7px;
        border-radius: 4px;
        background: #666;
    }
</style>
